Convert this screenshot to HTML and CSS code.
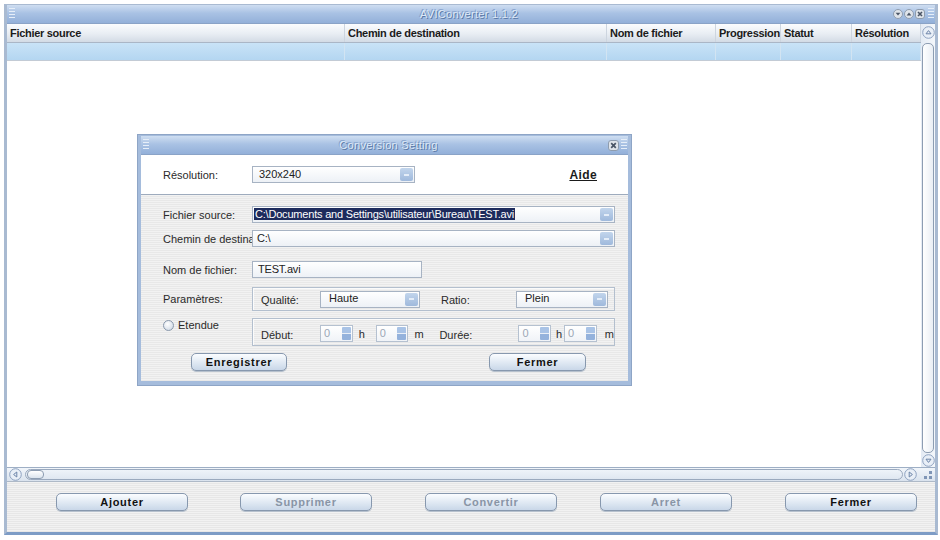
FILE: index.html
```html
<!DOCTYPE html>
<html lang="fr">
<head>
    <meta charset="UTF-8">
    <title>AVIConverter 1.1.2</title>
    <link rel="stylesheet" href="styles.css">
</head>
<body>
    <div class="app">
        <div class="titlebar">
            <span class="grip"></span>
            <span class="title">AVIConverter 1.1.2</span>
            <span class="win-btns">
                <svg width="10" height="10" viewBox="0 0 10 10"><circle cx="5" cy="5" r="4.5" class="wb"/><path d="M2.6 3.8 L7.4 3.8 L5 6.6 Z" fill="#4a5566"/></svg>
                <svg width="10" height="10" viewBox="0 0 10 10"><circle cx="5" cy="5" r="4.5" class="wb"/><path d="M2.6 6.4 L7.4 6.4 L5 3.4 Z" fill="#4a5566"/></svg>
                <svg width="10" height="10" viewBox="0 0 10 10"><rect x="0.5" y="0.5" width="9" height="9" rx="2.5" class="wb"/><path d="M3 3 L7 7 M7 3 L3 7" stroke="#4a5566" stroke-width="1.6"/></svg>
                <span class="grip small"></span>
            </span>
        </div>

        <div class="main">
            <div class="table">
                <div class="thead">
                    <span>Fichier source</span>
                    <span>Chemin de destination</span>
                    <span>Nom de fichier</span>
                    <span>Progression</span>
                    <span>Statut</span>
                    <span>Résolution</span>
                </div>
                <div class="trow">
                    <span></span><span></span><span></span><span></span><span></span><span></span>
                </div>
            </div>
            <div class="vscroll">
                <svg width="13" height="13" viewBox="0 0 13 13"><circle cx="6.5" cy="6.5" r="5.8" class="sb"/><path d="M4 7.8 L9 7.8 L6.5 4.6 Z" fill="none" stroke="#6c84a8" stroke-width="1"/></svg>
                <div class="vtrack"><div class="vthumb"></div></div>
                <svg width="13" height="13" viewBox="0 0 13 13"><circle cx="6.5" cy="6.5" r="5.8" class="sb"/><path d="M4 5.2 L9 5.2 L6.5 8.4 Z" fill="none" stroke="#6c84a8" stroke-width="1"/></svg>
            </div>
        </div>

        <div class="hscroll">
            <svg width="13" height="13" viewBox="0 0 13 13"><circle cx="6.5" cy="6.5" r="5.8" class="sb"/><path d="M7.8 4 L7.8 9 L4.6 6.5 Z" fill="none" stroke="#6c84a8" stroke-width="1"/></svg>
            <div class="htrack"><div class="hthumb"></div></div>
            <svg width="13" height="13" viewBox="0 0 13 13"><circle cx="6.5" cy="6.5" r="5.8" class="sb"/><path d="M5.2 4 L5.2 9 L8.4 6.5 Z" fill="none" stroke="#6c84a8" stroke-width="1"/></svg>
            <svg class="corner" width="12" height="12" viewBox="0 0 12 12"><rect x="8" y="2" width="3" height="3" fill="#7f95b6"/><rect x="8" y="7" width="3" height="3" fill="#7f95b6"/><rect x="3" y="7" width="3" height="3" fill="#7f95b6"/></svg>
        </div>

        <div class="actions">
            <button class="btn">Ajouter</button>
            <button class="btn gap-2" disabled>Supprimer</button>
            <button class="btn gap-3" disabled>Convertir</button>
            <button class="btn gap-4" disabled>Arret</button>
            <button class="btn gap-5">Fermer</button>
        </div>

        <div class="dialog">
            <div class="dlg-title">
                <span class="grip"></span>
                <span class="title">Conversion Setting</span>
                <svg width="11" height="11" viewBox="0 0 11 11"><rect x="0.5" y="0.5" width="10" height="10" rx="2.5" class="wb"/><path d="M3.2 3.2 L7.8 7.8 M7.8 3.2 L3.2 7.8" stroke="#4a5566" stroke-width="1.7"/></svg>
                <span class="grip small"></span>
            </div>
            <div class="dlg-top">
                <span class="lbl">Résolution:</span>
                <div class="combo w-res"><span>320x240</span><i class="arrow"></i></div>
                <a class="help">Aide</a>
            </div>
            <div class="dlg-body">
                <div class="frow r1">
                    <span class="lbl">Fichier source:</span>
                    <div class="combo w-full"><span><em class="sel">C:\Documents and Settings\utilisateur\Bureau\TEST.avi</em></span><i class="arrow"></i></div>
                </div>
                <div class="frow r2">
                    <span class="lbl">Chemin de destina</span>
                    <div class="combo w-full"><span>C:\</span><i class="arrow"></i></div>
                </div>
                <div class="frow r3">
                    <span class="lbl">Nom de fichier:</span>
                    <div class="field w-name">TEST.avi</div>
                </div>
                <div class="frow r4">
                    <span class="lbl">Paramètres:</span>
                    <div class="group g-params">
                        <span class="glbl">Qualité:</span>
                        <div class="combo w-q"><span>Haute</span><i class="arrow"></i></div>
                        <span class="glbl ratio">Ratio:</span>
                        <div class="combo w-r"><span>Plein</span><i class="arrow"></i></div>
                    </div>
                </div>
                <div class="frow r5">
                    <span class="lbl radio-lbl"><i class="radio"></i>Etendue</span>
                    <div class="group g-time">
                        <span class="glbl">Début:</span>
                        <div class="spin"><span>0</span><i class="spin-btn"></i></div>
                        <span class="unit u-h">h</span>
                        <div class="spin"><span>0</span><i class="spin-btn"></i></div>
                        <span class="unit u-m">m</span>
                        <span class="glbl dur">Durée:</span>
                        <div class="spin"><span>0</span><i class="spin-btn"></i></div>
                        <span class="unit u-h2">h</span>
                        <div class="spin"><span>0</span><i class="spin-btn"></i></div>
                        <span class="unit u-m2">m</span>
                    </div>
                </div>
                <div class="dlg-actions">
                    <button class="btn small">Enregistrer</button>
                    <button class="btn small">Fermer</button>
                </div>
            </div>
        </div>
    </div>
</body>
</html>
```

FILE: styles.css
```css
body {
    margin: 0;
    background: #fff;
    font-family: "Liberation Sans", Arial, sans-serif;
    font-size: 11px;
    color: #1b1b1b;
}
.app {
    position: relative;
    margin: 4px 0 0 4px;
    width: 934px;
    height: 531px;
    box-sizing: border-box;
    border: solid #a9bad1;
    border-width: 1px 3px 3px 3px;
    border-bottom-color: #7d9cc6;
    display: flex;
    flex-direction: column;
    background: #fff;
}

/* title bars */
.titlebar, .dlg-title {
    height: 18px;
    flex: none;
    display: flex;
    align-items: center;
    background: linear-gradient(#cfdef1, #a9c2e4 45%, #93b0d9);
    border-bottom: 1px solid #8aa3c7;
}
.title {
    flex: 1;
    text-align: center;
    color: #dde9f8;
    text-shadow: 1px 1px 0 #5a78a6, -1px -1px 0 #86a2cc;
    letter-spacing: 0.3px;
}
.titlebar .title { padding-left: 30px; }
.grip {
    width: 6px;
    height: 12px;
    margin-left: 2px;
    background: repeating-linear-gradient(#e6eef8 0 1px, transparent 1px 3px);
}
.grip.small { margin: 0 1px 0 2px; }
.win-btns {
    display: flex;
    align-items: center;
    gap: 1px;
}
.wb { fill: #dfe4ea; stroke: #8e9cae; stroke-width: 1; }

/* table */
.main {
    flex: 1;
    display: flex;
    min-height: 0;
}
.table { flex: 1; }
.thead, .trow {
    display: grid;
    grid-template-columns: 338px 262px 109px 65px 71px 1fr;
}
.thead {
    height: 18px;
    background: linear-gradient(#fbfcfe, #e8edf3 55%, #d3dbe5);
    border-bottom: 1px solid #aab6c6;
}
.thead span {
    font-weight: bold;
    line-height: 18px;
    padding-left: 3px;
    letter-spacing: -0.3px;
    border-right: 1px solid #cdd5df;
    white-space: nowrap;
    overflow: hidden;
}
.trow {
    height: 17px;
    background: linear-gradient(#c9e3f7, #b4d6f1);
    border-bottom: 1px solid #c3cbd5;
}
.trow span { border-right: 1px solid #d2e4f2; }

/* scrollbars */
.sb { fill: #e9eff7; stroke: #8ea2c0; stroke-width: 1; }
.vscroll {
    width: 14px;
    flex: none;
    display: flex;
    flex-direction: column;
    align-items: center;
    padding: 2px 0 0;
    background: linear-gradient(90deg, #e4ebf4, #f4f7fb);
}
.vtrack {
    flex: 1;
    width: 12px;
    margin: 1px 0;
    display: flex;
}
.vthumb {
    flex: 1;
    margin-top: 3px;
    border: 1px solid #8d9db2;
    border-radius: 5px;
    background: linear-gradient(90deg, #fff, #e9eef4);
}
.hscroll {
    height: 14px;
    flex: none;
    display: flex;
    align-items: center;
    padding-left: 2px;
    box-sizing: border-box;
    border-top: 1px solid #9eafc5;
    background: linear-gradient(#f1f5fa, #dae3ee);
}
.htrack {
    flex: 1;
    height: 11px;
    margin: 0 1px 0 3px;
    border: 1px solid #9aa9be;
    border-radius: 6px;
    box-sizing: border-box;
    display: flex;
    background: linear-gradient(#eef3f9, #dfe7f1);
}
.hthumb {
    width: 15px;
    margin-left: 1px;
    border: 1px solid #8d9db2;
    border-radius: 4px;
    background: linear-gradient(#fff, #dbe4ee);
}
.corner { margin: 0 2px 0 4px; }

/* bottom bar */
.actions {
    height: 51px;
    flex: none;
    box-sizing: border-box;
    padding: 11px 0 0 49px;
    display: flex;
    align-items: flex-start;
    border-top: 1px solid #aeb9c7;
    background: repeating-linear-gradient(#f2f2f2 0 1px, #e7e7e7 1px 2px);
}
.btn {
    width: 132px;
    height: 18px;
    padding: 0;
    border: 1px solid #8798ae;
    border-radius: 5px;
    background: linear-gradient(#fbfdff, #e4ecf5 45%, #c9d7e8);
    box-shadow: 0 1px 0 #b7c1cd;
    font: bold 11px "Liberation Sans", Arial, sans-serif;
    letter-spacing: 0.7px;
    color: #111;
}
.btn:disabled { color: #8995a6; }
.gap-2 { margin-left: 52px; }
.gap-3 { margin-left: 53px; }
.gap-4 { margin-left: 43px; }
.gap-5 { margin-left: 53px; }

/* dialog */
.dialog {
    position: absolute;
    left: 131px;
    top: 130px;
    width: 493px;
    height: 250px;
    box-sizing: border-box;
    border: solid #a5bcdc;
    border-width: 1px 3px 4px 3px;
    box-shadow: 0 0 0 1px #8ea5c6;
    display: flex;
    flex-direction: column;
    background: #fff;
}
.dlg-title .title { padding-left: 20px; }
.dlg-top {
    height: 39px;
    flex: none;
    display: flex;
    align-items: center;
    padding: 0 31px 0 22px;
    border-bottom: 1px solid #9eabbd;
    background: #fff;
}
.help {
    margin-left: auto;
    font-weight: bold;
    font-size: 12px;
    text-decoration: underline;
    color: #1b1b1b;
    letter-spacing: 0.4px;
}
.dlg-body {
    flex: 1;
    padding: 11px 0 0 22px;
    background: repeating-linear-gradient(#f2f2f2 0 1px, #e8e8e8 1px 2px);
}
.lbl {
    width: 89px;
    flex: none;
    color: #2a2a2a;
    white-space: nowrap;
}
.frow {
    display: flex;
    align-items: center;
}
.r2 { margin-top: 7px; }
.r3 { margin-top: 14px; }
.r4 { margin-top: 9px; }
.r5 { margin-top: 7px; }

.combo, .field {
    height: 17px;
    box-sizing: border-box;
    border: 1px solid #a7b3c3;
    background: linear-gradient(#fff, #edf1f6);
    display: flex;
    align-items: stretch;
}
.combo span, .field {
    flex: 1;
    padding-left: 5px;
    line-height: 15px;
    letter-spacing: -0.2px;
    white-space: nowrap;
    overflow: hidden;
    color: #222;
}
.field { flex: none; }
.combo span { padding-left: 4px; }
.w-res { width: 163px; }
.w-res span { padding-left: 6px; letter-spacing: 0; }
.w-full { width: 363px; }
.w-name { width: 170px; }
.w-q { width: 100px; }
.w-r { width: 92px; }
.w-q span, .w-r span { padding-left: 8px; line-height: 13px; letter-spacing: 0; }
.arrow {
    width: 13px;
    margin: 1px;
    flex: none;
    border-radius: 2px;
    background: linear-gradient(#c2d5ec, #9fb9dc);
    display: flex;
    align-items: center;
    justify-content: center;
}
.arrow::after {
    content: "";
    width: 5px;
    height: 2px;
    background: #e4edf8;
}
.sel {
    font-style: normal;
    background: #1d2b5c;
    color: #fff;
    padding: 0 1px;
    margin-left: -3px;
}

.group {
    width: 363px;
    box-sizing: border-box;
    border: 1px solid #b3bfce;
    box-shadow: inset 1px 1px 0 #fbfbfb;
    display: flex;
    align-items: center;
    padding-left: 8px;
}
.g-params { height: 24px; }
.g-time { height: 28px; padding-top: 3px; }
.glbl { width: 59px; flex: none; color: #2a2a2a; padding-top: 2px; }
.ratio { width: 75px; margin-left: 21px; }
.dur { width: 79px; }
.spin {
    width: 33px;
    height: 17px;
    box-sizing: border-box;
    border: 1px solid #b5c1d0;
    background: linear-gradient(#fff, #f0f3f7);
    display: flex;
}
.spin span {
    flex: 1;
    padding-left: 3px;
    line-height: 15px;
    color: #9ca7b6;
}
.spin-btn {
    width: 9px;
    margin: 1px;
    background: linear-gradient(#a9c3e6 0 45%, #e9eff7 45% 55%, #94b2dc 55%);
    border-radius: 1px;
}
.unit { flex: none; color: #2a2a2a; }
.u-h { margin-left: 6px; width: 17px; }
.u-m { margin-left: 6px; width: 25px; }
.u-h2 { margin-left: 5px; width: 8px; }
.u-m2 { margin-left: 8px; }
.radio-lbl { display: flex; align-items: center; gap: 4px; margin-top: -14px; }
.radio {
    width: 9px;
    height: 9px;
    border-radius: 50%;
    border: 1px solid #8a99ad;
    background: radial-gradient(circle at 40% 35%, #fff, #c8d3e1);
}

.dlg-actions {
    display: flex;
    margin-top: 7px;
    padding-left: 28px;
}
.btn.small { width: 96px; }
.btn.small + .btn.small { margin-left: 202px; width: 97px; }
```
